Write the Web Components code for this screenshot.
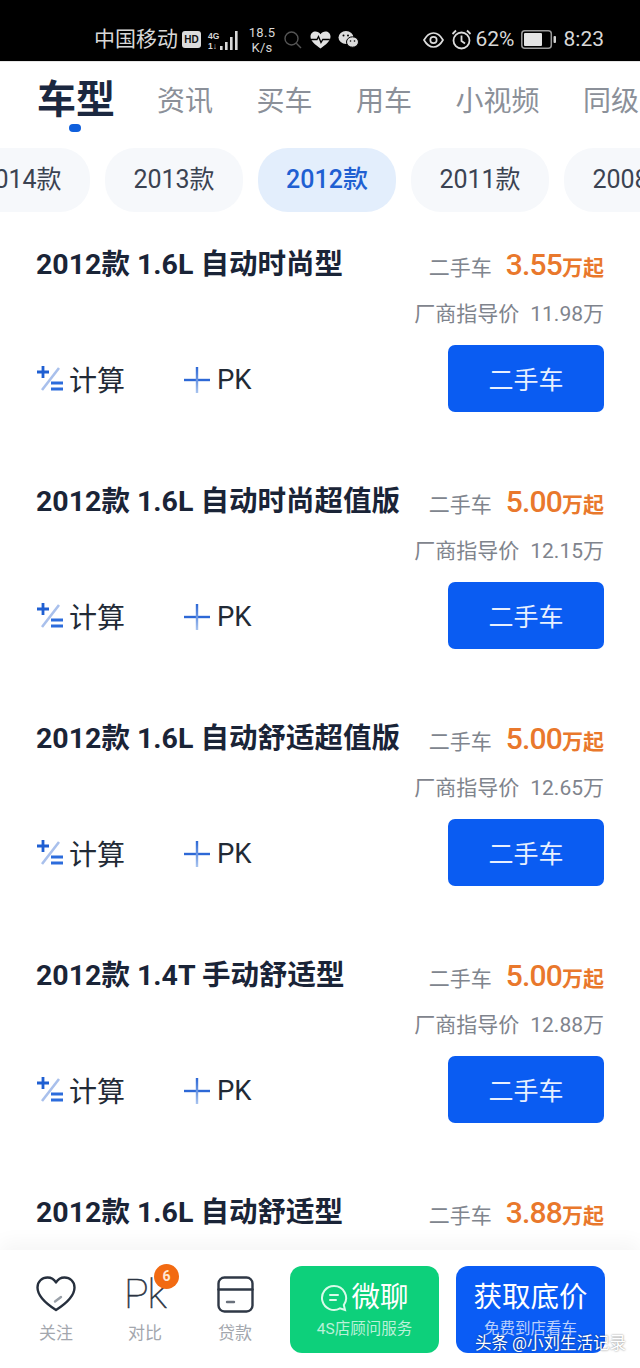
<!DOCTYPE html>
<html lang="zh">
<head>
<meta charset="utf-8">
<title>车型</title>
<style>
  html, body { margin: 0; height: 100%; background: #fff; }
  body { font-family: Roboto, "Noto Sans CJK SC", sans-serif; overflow: hidden; }
  #page { display: flex; flex-direction: column; height: 1368px; width: 640px; overflow: hidden; position: relative; }
  #list { flex: 1; min-height: 0; overflow: hidden; }
</style>
</head>
<body>
<div id="page">
  <status-bar></status-bar>
  <nav-tabs></nav-tabs>
  <year-chips></year-chips>
  <div id="list">
    <car-row name="2012款 1.6L 自动时尚型" price="3.55" guide="11.98万"></car-row>
    <car-row name="2012款 1.6L 自动时尚超值版" price="5.00" guide="12.15万"></car-row>
    <car-row name="2012款 1.6L 自动舒适超值版" price="5.00" guide="12.65万"></car-row>
    <car-row name="2012款 1.4T 手动舒适型" price="5.00" guide="12.88万"></car-row>
    <car-row name="2012款 1.6L 自动舒适型" price="3.88" guide=""></car-row>
  </div>
  <bottom-bar></bottom-bar>
</div>

<script>
const FONT = 'Roboto, "Noto Sans CJK SC", sans-serif';

class StatusBar extends HTMLElement {
  constructor() {
    super();
    this.attachShadow({ mode: "open" });
    this.shadowRoot.innerHTML = `
      <style>
        :host {
          display: flex;
          justify-content: space-between;
          align-items: center;
          height: 62px;
          box-sizing: border-box;
          padding: 18px 36px 0 94px;
          background: #000;
          color: #d8d8d8;
          font: 400 21px/1 ${FONT};
          border-bottom: 1px solid #e6e6e6;
          flex: none;
        }
        .side { display: flex; align-items: center; }
        .hd {
          width: 19px; height: 17px; margin-left: 4px; border-radius: 3px;
          background: #dcdcdc; color: #111;
          font: 700 10px/17px "Liberation Sans", sans-serif; text-align: center;
        }
        .net { display: flex; align-items: flex-end; margin-left: 7px; height: 22px; }
        .net-t { font: 700 8.500px/10px "Liberation Sans", sans-serif; width: 12px; display: flex; flex-direction: column; }
        .speed { font-size: 13px; line-height: 15px; text-align: center; margin-left: 8px; width: 28px; letter-spacing: .3px; }
        svg { display: block; }
        .time { margin-left: 8px; }
        .pct { margin-left: 4px; }
      </style>
      <div class="side">
        <span>中国移动</span>
        <span class="hd">HD</span>
        <div class="net">
          <div class="net-t"><span>4G</span><span>1↓</span></div>
          <svg width="20" height="22" viewBox="0 0 20 22" fill="#d8d8d8">
            <rect x="0" y="17" width="2.600" height="4"/><rect x="5" y="13" width="2.600" height="8"/>
            <rect x="10" y="8" width="2.600" height="13"/><rect x="15" y="2" width="2.600" height="19"/>
          </svg>
        </div>
        <div class="speed">18.5<br>K/s</div>
        <svg style="margin-left:7px" width="20" height="20" viewBox="0 0 20 20" fill="none" stroke="#555" stroke-width="1.400">
          <circle cx="8.500" cy="8.500" r="6.500"/><path d="M13.300 13.300 18 18"/>
        </svg>
        <svg style="margin-left:7px" width="21" height="18" viewBox="0 0 21 18">
          <path d="M10.500 17.500C5 13.500 .5 10 .5 5.500 .5 2.500 2.800 .5 5.500 .5c2 0 3.800 1 5 2.800C11.700 1.500 13.500 .5 15.500 .5c2.700 0 5 2 5 5 0 4.500-4.500 8-10 12z" fill="#e2e2e2"/>
          <path d="M1 8.500h6l1.500-3 2.500 6 1.800-3h7" fill="none" stroke="#000" stroke-width="1.300"/>
        </svg>
        <svg style="margin-left:7px" width="21" height="19" viewBox="0 0 21 19" fill="#dcdcdc">
          <ellipse cx="8" cy="7.500" rx="7.500" ry="6.500"/>
          <ellipse cx="14.500" cy="12" rx="6" ry="5.200" stroke="#000"/>
          <circle cx="5.500" cy="5.500" r="1" fill="#000"/><circle cx="10" cy="5.500" r="1" fill="#000"/>
          <circle cx="12.500" cy="11" r=".8" fill="#000"/><circle cx="16.500" cy="11" r=".8" fill="#000"/>
        </svg>
      </div>
      <div class="side">
        <svg width="21" height="16" viewBox="0 0 21 16" fill="none" stroke="#dcdcdc" stroke-width="1.700">
          <path d="M1 8c2.500-4.500 5.800-7 9.500-7s7 2.500 9.500 7c-2.500 4.500-5.800 7-9.500 7S3.500 12.500 1 8z"/>
          <circle cx="10.500" cy="8" r="3.200"/>
        </svg>
        <svg style="margin-left:7px" width="21" height="21" viewBox="0 0 21 21" fill="none" stroke="#dcdcdc" stroke-width="1.800">
          <circle cx="10.500" cy="11.500" r="8"/><path d="M10.500 6.500v5.500l3.500 2.500"/>
          <path d="M1.500 5 5 1.500M19.500 5 16 1.500"/>
        </svg>
        <span class="pct">62%</span>
        <svg style="margin-left:6px" width="35" height="19" viewBox="0 0 35 19">
          <rect x=".8" y=".8" width="29.500" height="17.400" rx="3" fill="none" stroke="#9a9a9a" stroke-width="1.500"/>
          <rect x="3" y="3" width="18" height="13" rx="1" fill="#e4e4e4"/>
          <rect x="32.500" y="6" width="2.500" height="7" rx="1" fill="#d0d0d0"/>
        </svg>
        <span class="time">8:23</span>
      </div>
    `;
  }
}

class NavTabs extends HTMLElement {
  constructor() {
    super();
    this.attachShadow({ mode: "open" });
    this.shadowRoot.innerHTML = `
      <style>
        :host {
          display: flex;
          gap: 43.500px;
          height: 86px;
          box-sizing: border-box;
          padding: 17px 0 0 37px;
          overflow: hidden;
          background: #fff;
          font-family: ${FONT};
          white-space: nowrap;
          flex: none;
        }
        .tab { font-size: 28px; line-height: 42px; color: #8b9099; flex: none; margin-top: 2px; }
        .on {
          display: flex; flex-direction: column; align-items: center;
          font-size: 39px; font-weight: 700; color: #1b2840; margin-top: 0;
          margin-right: -1.500px;
        }
        .on i { display: block; width: 12px; height: 8px; border-radius: 4px; background: #0f5fdc; margin-top: 3px; margin-right: 2px; }
      </style>
      <div class="tab on">车型<i></i></div>
      <div class="tab">资讯</div>
      <div class="tab">买车</div>
      <div class="tab">用车</div>
      <div class="tab">小视频</div>
      <div class="tab">同级</div>
    `;
  }
}

class YearChips extends HTMLElement {
  constructor() {
    super();
    this.attachShadow({ mode: "open" });
    const years = ["2014款", "2013款", "2012款", "2011款", "2008款"];
    this.shadowRoot.innerHTML = `
      <style>
        :host { display: block; overflow: hidden; height: 89px; flex: none; }
        .row { display: flex; gap: 15px; margin-left: -48px; width: 800px; }
        .chip {
          flex: none; width: 138px; height: 64px; border-radius: 30px;
          background: #f6f8fb; color: #3b4352;
          font: 400 25px/64px ${FONT}; text-align: center;
        }
        .on { background: #e3eefc; color: #1f60d2; font-weight: 500; }
      </style>
      <div class="row">
        ${years.map((y) => `<div class="chip${y === "2012款" ? " on" : ""}">${y}</div>`).join("")}
      </div>
    `;
  }
}

class CarRow extends HTMLElement {
  constructor() {
    super();
    this.attachShadow({ mode: "open" });
  }

  connectedCallback() {
    const name = this.getAttribute("name");
    const price = this.getAttribute("price");
    const guide = this.getAttribute("guide");
    this.shadowRoot.innerHTML = `
      <style>
        :host {
          display: block;
          height: 237px;
          box-sizing: border-box;
          padding: 0 36px;
          font-family: ${FONT};
        }
        .top { display: flex; justify-content: space-between; align-items: center; height: 48px; white-space: nowrap; }
        .name { font-size: 28.500px; font-weight: 700; color: #1a2437; }
        .price { display: flex; align-items: baseline; padding-top: 6px; }
        .used { font-size: 21px; color: #80858e; margin-right: 14px; }
        .num { font-size: 30px; font-weight: 500; color: #e9782c; letter-spacing: -.8px; }
        .unit { font-size: 21px; font-weight: 700; color: #e9782c; }
        .guide { display: flex; justify-content: flex-end; height: 24px; margin-top: 17px; font-size: 21px; line-height: 24px; color: #7f848d; gap: 11px; }
        .bottom { display: flex; align-items: center; margin-top: 19px; height: 67px; }
        .act { display: flex; align-items: center; font-size: 28px; color: #222a36; }
        .act svg { display: block; }
        .calc svg { margin-right: 5px; }
        .pk { margin-left: 59px; margin-top: 2px; font-size: 27.500px; }
        .pk svg { margin-right: 7px; }
        .buy {
          margin-left: auto; width: 156px; height: 67px; border-radius: 7px;
          background: #0a5cf2; color: #e8f0ff; font-size: 25px; line-height: 71px; text-align: center;
        }
      </style>
      <div class="top">
        <div class="name">${name}</div>
        <div class="price">
          <span class="used">二手车</span><span class="num">${price}</span><span class="unit">万起</span>
        </div>
      </div>
      ${guide ? `<div class="guide"><span>厂商指导价</span><span>${guide}</span></div>` : ""}
      <div class="bottom">
        <div class="act calc">
          <svg width="28" height="27" viewBox="0 0 28 27" fill="none">
            <path d="M1 7h12M7 1v12" stroke="#1f5fd2" stroke-width="2.800"/>
            <path d="M23 3 6 25" stroke="#a9c0ec" stroke-width="2.600"/>
            <path d="M15 18h12M15 24h12" stroke="#2c6cdc" stroke-width="2.800"/>
          </svg>计算
        </div>
        <div class="act pk">
          <svg width="26" height="26" viewBox="0 0 26 26" fill="none">
            <defs><linearGradient id="pv" x1="0" y1="0" x2="0" y2="1"><stop offset="0" stop-color="#2d68d6"/><stop offset="1" stop-color="#a9c4ef"/></linearGradient></defs>
            <path d="M0 13h26" stroke="#2d68d6" stroke-width="2.400"/>
            <rect x="11.800" y="0" width="2.400" height="26" fill="url(#pv)"/>
          </svg>PK
        </div>
        <div class="buy">二手车</div>
      </div>
    `;
  }
}

class BottomBar extends HTMLElement {
  constructor() {
    super();
    this.attachShadow({ mode: "open" });
    this.shadowRoot.innerHTML = `
      <style>
        :host {
          display: flex;
          position: relative;
          flex: none;
          height: 118px;
          box-sizing: border-box;
          padding: 16px 35px 15px 36px;
          background: #fff;
          box-shadow: 0 -8px 18px rgba(0, 0, 0, .04);
          font-family: ${FONT};
        }
        .tool {
          display: flex; flex-direction: column; align-items: center;
          flex: none; width: 40px; position: relative;
          font-size: 17px; color: #a3a7ae;
        }
        .tool .ic { height: 38px; margin-top: 9px; margin-bottom: 10px; display: flex; align-items: center; justify-content: center; }
        .tool span.lb { line-height: 20px; white-space: nowrap; }
        .pk-word { font: 100 41px/38px Roboto, sans-serif; color: #2b3442; letter-spacing: -1px; -webkit-text-stroke: .5px #2b3442; }
        .badge {
          position: absolute; top: -2px; right: -14px; width: 25px; height: 25px; border-radius: 50%;
          background: #f26a12; color: #ffe7d3; font: 700 14px/25px Roboto, sans-serif; text-align: center;
        }
        .cta {
          flex: none; width: 149px; height: 87px; box-sizing: border-box; border-radius: 12px; color: #fff;
          display: flex; flex-direction: column; align-items: center; justify-content: center;
        }
        .green { background: #0dd07b; margin-left: 35px; }
        .blue { background: #0a5cf5; margin-left: 17px; }
        .cta b { font-weight: 400; font-size: 28.500px; line-height: 39px; display: flex; align-items: center; }
        .cta small { font-size: 15.500px; line-height: 24px; color: rgba(255,255,255,.72); }
        .cta svg { margin-right: 3px; }
        .mark {
          position: absolute; left: 475px; top: 84px; color: #fff; font-size: 16.500px; line-height: 20px;
          white-space: nowrap; text-shadow: 0 0 2px rgba(0,0,0,.55);
        }
      </style>
      <div class="tool">
        <div class="ic">
          <svg width="40" height="36" viewBox="0 0 40 36" fill="none" stroke="#262f3d" stroke-width="2.400" stroke-linecap="round" stroke-linejoin="round">
            <path d="M20 34C9 27 1.500 20 1.500 11.500 1.500 5.500 6 1.500 11.500 1.500c3.500 0 6.500 1.500 8.500 5 2-3.500 5-5 8.500-5 5.500 0 10 4 10 10C38.500 20 31 27 20 34z"/>
            <path d="M19 25.500l6-4.500" stroke="#9aa0a8"/>
          </svg>
        </div>
        <span class="lb">关注</span>
      </div>
      <div class="tool" style="margin-left:49px">
        <div class="ic"><span class="pk-word">Pk</span></div>
        <span class="badge">6</span>
        <span class="lb">对比</span>
      </div>
      <div class="tool" style="margin-left:50px">
        <div class="ic">
          <svg width="37" height="37" viewBox="0 0 37 37" fill="none" stroke="#2f3846" stroke-width="2.400" stroke-linecap="round">
            <rect x="1.500" y="1.500" width="34" height="34" rx="6"/>
            <path d="M1.500 13.500h34"/>
            <path d="M10 26h7" stroke="#6a717c"/>
          </svg>
        </div>
        <span class="lb">贷款</span>
      </div>
      <div class="cta green">
        <b>
          <svg width="28" height="28" viewBox="0 0 28 28" fill="none" stroke="#d9fbe9" stroke-width="2" stroke-linecap="round">
            <path d="M14 2a12 12 0 1 0 6 22.400l5 1.600-1.200-5A12 12 0 0 0 14 2z"/>
            <path d="M10 11h8M10 16h6"/>
          </svg>微聊
        </b>
        <small>4S店顾问服务</small>
      </div>
      <div class="cta blue">
        <b>获取底价</b>
        <small>免费到店看车</small>
      </div>
      <div class="mark">头条 @小刘生活记录</div>
    `;
  }
}

customElements.define("status-bar", StatusBar);
customElements.define("nav-tabs", NavTabs);
customElements.define("year-chips", YearChips);
customElements.define("car-row", CarRow);
customElements.define("bottom-bar", BottomBar);
</script>
</body>
</html>
